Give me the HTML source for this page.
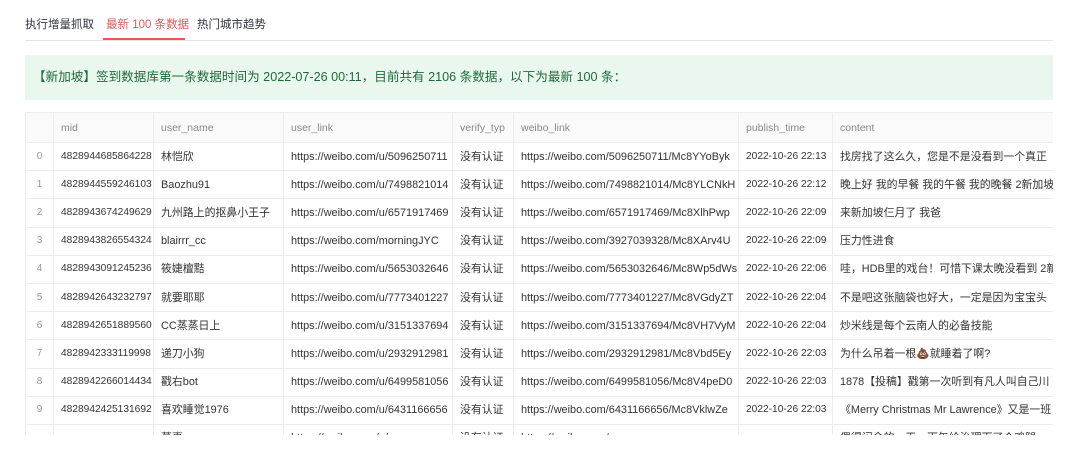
<html><head><style>
body{margin:0;background:#fff;font-family:"Liberation Sans","Noto Sans CJK SC",sans-serif;width:1080px;height:460px;overflow:hidden;position:relative;color:#31333f}
.tabs{position:absolute;left:25px;top:16px;font-size:11.5px;}
.tabs span{position:absolute;white-space:nowrap;top:0}
.line{position:absolute;left:25px;top:40px;width:1028px;height:1px;background:#e6e6e6}
.ul{position:absolute;left:103px;top:38px;width:82px;height:2px;background:#e05a5a}
.banner{position:absolute;left:25px;top:55px;width:1028px;height:45px;background:#e9f7ee;color:#1e6b3a;font-size:12.6px;line-height:45px;box-sizing:border-box;padding-left:8px}
.tw{position:absolute;left:25px;top:112px;width:1028px;height:323px;overflow:hidden}
table{border-collapse:collapse;table-layout:fixed;width:1047px;font-size:10.9px;white-space:nowrap}
td,th{border:1px solid #ececec;overflow:hidden;padding:0 0 0 7px;text-align:left;vertical-align:middle;line-height:14px}
tr{height:28.2px}
tr.h{height:30px}
th{font-weight:normal;color:#888;background:#fafafa;font-size:10.5px}
td.i{color:#999;text-align:center;padding:0;font-size:10px}
tr td{color:#333}
tr td:nth-child(2),tr td:nth-child(7){font-size:10.2px}
</style></head><body>
<div class="tabs"><span style="left:0">执行增量抓取</span><span style="left:81px;color:#e05a5a">最新 100 条数据</span><span style="left:172px">热门城市趋势</span></div>
<div class="line"></div><div class="ul"></div>
<div class="banner">【新加坡】签到数据库第一条数据时间为 2022-07-26 00:11，目前共有 2106 条数据，以下为最新 100 条：</div>
<div class="tw"><table>
<colgroup><col style="width:28px"><col style="width:100px"><col style="width:130px"><col style="width:169px"><col style="width:61px"><col style="width:225px"><col style="width:94px"><col style="width:240px"></colgroup>
<tr class="h"><th></th><th>mid</th><th>user_name</th><th>user_link</th><th>verify_typ</th><th>weibo_link</th><th>publish_time</th><th>content</th></tr>
<tr><td class="i">0</td><td>4828944685864228</td><td>林恺欣</td><td>https://weibo.com/u/5096250711</td><td>没有认证</td><td>https://weibo.com/5096250711/Mc8YYoByk</td><td>2022-10-26 22:13</td><td> 找房找了这么久，您是不是没看到一个真正</td></tr>
<tr><td class="i">1</td><td>4828944559246103</td><td>Baozhu91</td><td>https://weibo.com/u/7498821014</td><td>没有认证</td><td>https://weibo.com/7498821014/Mc8YLCNkH</td><td>2022-10-26 22:12</td><td>晚上好 我的早餐 我的午餐 我的晚餐 2新加坡</td></tr>
<tr><td class="i">2</td><td>4828943674249629</td><td>九州路上的抠鼻小王子</td><td>https://weibo.com/u/6571917469</td><td>没有认证</td><td>https://weibo.com/6571917469/Mc8XlhPwp</td><td>2022-10-26 22:09</td><td>来新加坡仨月了 我爸</td></tr>
<tr><td class="i">3</td><td>4828943826554324</td><td>blairrr_cc</td><td>https://weibo.com/morningJYC</td><td>没有认证</td><td>https://weibo.com/3927039328/Mc8XArv4U</td><td>2022-10-26 22:09</td><td>压力性进食</td></tr>
<tr><td class="i">4</td><td>4828943091245236</td><td>筱婕檀黠</td><td>https://weibo.com/u/5653032646</td><td>没有认证</td><td>https://weibo.com/5653032646/Mc8Wp5dWs</td><td>2022-10-26 22:06</td><td>哇，HDB里的戏台！可惜下课太晚没看到 2新</td></tr>
<tr><td class="i">5</td><td>4828942643232797</td><td>就要耶耶</td><td>https://weibo.com/u/7773401227</td><td>没有认证</td><td>https://weibo.com/7773401227/Mc8VGdyZT</td><td>2022-10-26 22:04</td><td>不是吧这张脑袋也好大，一定是因为宝宝头</td></tr>
<tr><td class="i">6</td><td>4828942651889560</td><td>CC蒸蒸日上</td><td>https://weibo.com/u/3151337694</td><td>没有认证</td><td>https://weibo.com/3151337694/Mc8VH7VyM</td><td>2022-10-26 22:04</td><td>炒米线是每个云南人的必备技能</td></tr>
<tr><td class="i">7</td><td>4828942333119998</td><td>递刀小狗</td><td>https://weibo.com/u/2932912981</td><td>没有认证</td><td>https://weibo.com/2932912981/Mc8Vbd5Ey</td><td>2022-10-26 22:03</td><td>为什么吊着一根💩就睡着了啊?</td></tr>
<tr><td class="i">8</td><td>4828942266014434</td><td>戳右bot</td><td>https://weibo.com/u/6499581056</td><td>没有认证</td><td>https://weibo.com/6499581056/Mc8V4peD0</td><td>2022-10-26 22:03</td><td> 1878【投稿】戳第一次听到有凡人叫自己川</td></tr>
<tr><td class="i">9</td><td>4828942425131692</td><td>喜欢睡觉1976</td><td>https://weibo.com/u/6431166656</td><td>没有认证</td><td>https://weibo.com/6431166656/Mc8VklwZe</td><td>2022-10-26 22:03</td><td>《Merry Christmas Mr Lawrence》又是一班</td></tr>
<tr><td class="i"></td><td></td><td>草事</td><td>https://weibo.com/u/</td><td>没有认证</td><td>https://weibo.com/</td><td></td><td>偶得闲余的一天，下午给治理下了个鸡腿</td></tr>
</table></div>
</body></html>
